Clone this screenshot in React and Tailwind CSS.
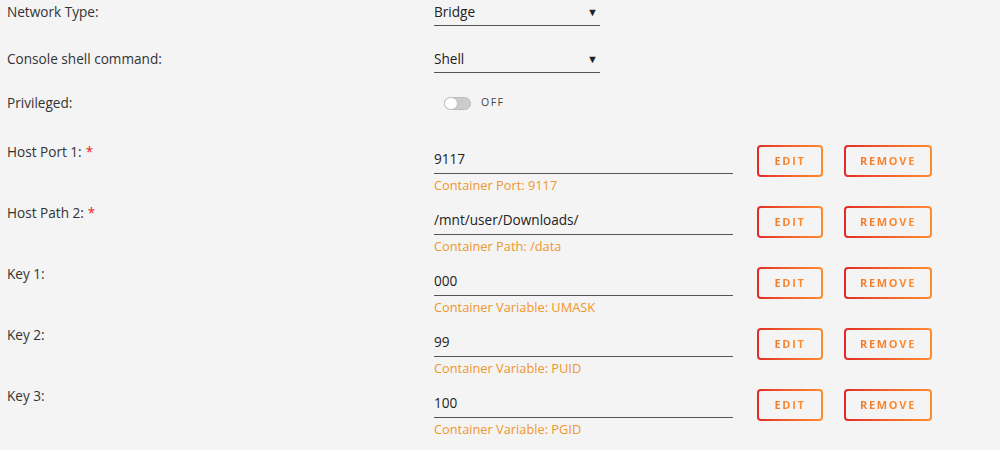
const mappings = [
  { label: 'Host Port 1:', required: true, value: '9117', hint: 'Container Port: 9117' },
  { label: 'Host Path 2:', required: true, value: '/mnt/user/Downloads/', hint: 'Container Path: /data' },
  { label: 'Key 1:', value: '000', hint: 'Container Variable: UMASK' },
  { label: 'Key 2:', value: '99', hint: 'Container Variable: PUID' },
  { label: 'Key 3:', value: '100', hint: 'Container Variable: PGID' },
]

function GradientButton({ children, width }) {
  return (
    <div className={`p-[2px] rounded-[4px] bg-linear-to-r from-[#e22828] to-[#ff8c2f] ${width}`}>
      <div className="h-[28px] rounded-[2px] bg-[#f4f4f4] flex items-center justify-center">
        <span className="text-[11px] font-bold tracking-[1.7px] bg-linear-to-r from-[#f27a2a] to-[#ff8c2f] bg-clip-text text-transparent">
          {children}
        </span>
      </div>
    </div>
  )
}

function SelectField({ value }) {
  return (
    <div className="w-[166px] h-[26px] border-b border-[#555] flex justify-between pt-[3px]">
      <span className="leading-[18px] text-[#222]">{value}</span>
      <span className="text-[11px] leading-[18px] pr-[2px] text-[#222]">▼</span>
    </div>
  )
}

export default function App() {
  return (
    <div className="w-[1000px] h-[450px] bg-[#f4f4f4] text-[13.6px] text-[#333] overflow-hidden" style={{ fontFamily: '"Open Sans", sans-serif' }}>
      {/* Basic settings */}
      <div className="flex h-[47px]">
        <div className="w-[434px] pl-[7px] pt-[3px] leading-[18px]">Network Type:</div>
        <SelectField value="Bridge" />
      </div>
      <div className="flex h-[47px]">
        <div className="w-[434px] pl-[7px] pt-[3px] leading-[18px]">Console shell command:</div>
        <SelectField value="Shell" />
      </div>
      <div className="flex h-[47px]">
        <div className="w-[434px] pl-[7px] leading-[18px]">Privileged:</div>
        <div className="flex items-center h-[18px] pl-[10px] gap-[10px]">
          <div className="w-[27px] h-[13px] rounded-full bg-[#ccc] border border-[#bbb] relative">
            <div className="absolute left-[-1px] top-[-1px] w-[14px] h-[13px] rounded-full bg-white border border-[#bbb]" />
          </div>
          <span className="text-[10.5px] tracking-[1.5px] text-[#444]">OFF</span>
        </div>
      </div>

      {/* Port, path and variable mappings */}
      {mappings.map((m) => (
        <div key={m.label} className="flex h-[61px]">
          <div className="w-[434px] pl-[7px] pt-[2px] leading-[18px]">
            {m.label}
            {m.required && <span className="text-[#e22828] ml-[4px]">*</span>}
          </div>
          <div className="w-[299px]">
            <div className="pt-[9px] pb-[5px] border-b border-[#555] leading-[18px] text-[#222]">{m.value}</div>
            <div className="mt-[3px] text-[12.8px] leading-[16px] text-[#ef962c]">{m.hint}</div>
          </div>
          <div className="flex gap-[21px] ml-[24px] pt-[4px] h-[36px]">
            <GradientButton width="w-[66px]">EDIT</GradientButton>
            <GradientButton width="w-[88px]">REMOVE</GradientButton>
          </div>
        </div>
      ))}
    </div>
  )
}
